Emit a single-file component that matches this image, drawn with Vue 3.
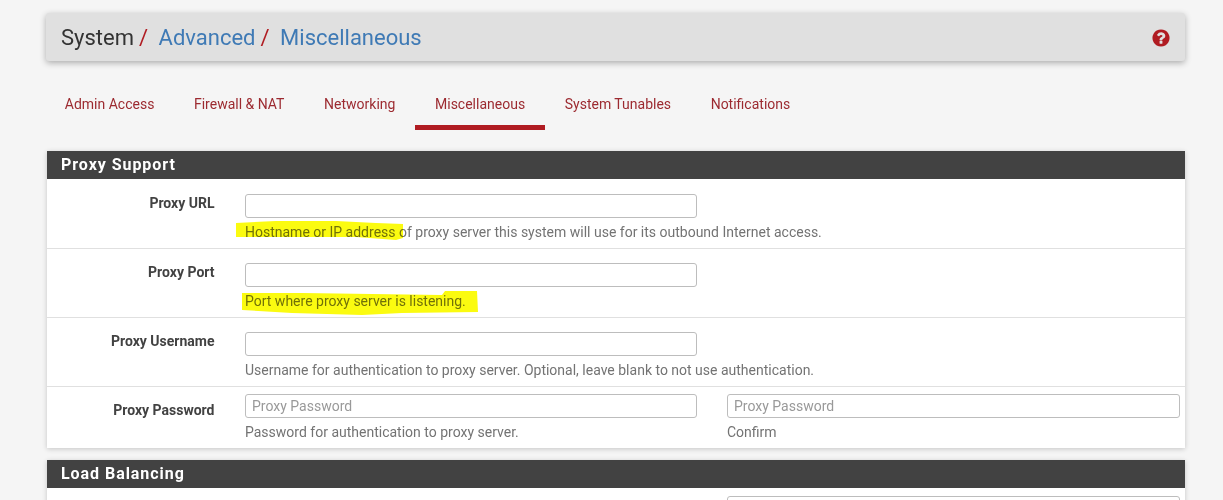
<template>
  <div class="page">
    <div class="crumbs">
      <h2 class="crumb-title">
        <span>System</span><em>/</em>
        <a>Advanced</a><em>/</em>
        <a>Miscellaneous</a>
      </h2>
      <svg class="help-icon" viewBox="0 0 1792 1792" aria-hidden="true">
        <path
          fill="#b01c22"
          d="M1024 1376v-192q0-14-9-23t-23-9h-192q-14 0-23 9t-9 23v192q0 14 9 23t23 9h192q14 0 23-9t9-23zm256-672q0-88-55.5-163t-138.5-116-170-41q-243 0-371 213-15 24 8 42l132 100q7 6 19 6 16 0 25-12 53-68 86-92 34-24 86-24 48 0 85.5 26t37.5 59q0 38-20 61t-68 45q-63 28-115.5 86.5t-52.5 125.5v36q0 14 9 23t23 9h192q14 0 23-9t9-23q0-19 21.5-49.5t54.5-49.5q32-18 49-28.5t46-35 44.5-48 28-60.5 12.5-81zm384 192q0 209-103 385.5t-279.5 279.5-385.5 103-385.5-103-279.5-279.5-103-385.5 103-385.5 279.5-279.5 385.5-103 385.5 103 279.5 279.5 103 385.5z"
        />
      </svg>
    </div>

    <ul class="tabs">
      <li v-for="tab in tabs" :key="tab" :class="{ active: tab === 'Miscellaneous' }">{{ tab }}</li>
    </ul>

    <section class="panel">
      <h3 class="panel-head">Proxy Support</h3>
      <div class="row">
        <label class="row-label">Proxy URL</label>
        <div class="field">
          <input class="text-input" type="text" />
          <div class="help">Hostname or IP address of proxy server this system will use for its outbound Internet access.</div>
          <svg class="marker marker-url" viewBox="0 0 168 20" aria-hidden="true">
            <path d="M0 3 L40 1 L100 1 L140 3 L167 4 L167 18 L160 20 L120 17 L60 17 L0 17 Z" />
          </svg>
        </div>
      </div>
      <div class="row">
        <label class="row-label">Proxy Port</label>
        <div class="field">
          <input class="text-input" type="text" />
          <div class="help">Port where proxy server is listening.</div>
          <svg class="marker marker-port" viewBox="0 0 236 26" aria-hidden="true">
            <path d="M0 3 L60 3 L200 5 L203 1 L235 1 L236 22 L160 23 L120 25 L50 23 L0 20 Z" />
          </svg>
        </div>
      </div>
      <div class="row">
        <label class="row-label">Proxy Username</label>
        <div class="field">
          <input class="text-input" type="text" />
          <div class="help">Username for authentication to proxy server. Optional, leave blank to not use authentication.</div>
        </div>
      </div>
      <div class="row row-double">
        <label class="row-label">Proxy Password</label>
        <div class="field">
          <input class="text-input" type="text" placeholder="Proxy Password" />
          <div class="help">Password for authentication to proxy server.</div>
        </div>
        <div class="field">
          <input class="text-input" type="text" placeholder="Proxy Password" />
          <div class="help">Confirm</div>
        </div>
      </div>
    </section>

    <section class="panel">
      <h3 class="panel-head">Load Balancing</h3>
      <div class="row row-double">
        <span></span>
        <span></span>
        <div class="field">
          <input class="text-input" type="text" />
        </div>
      </div>
    </section>
  </div>
</template>

<script setup>
const tabs = [
  'Admin Access',
  'Firewall & NAT',
  'Networking',
  'Miscellaneous',
  'System Tunables',
  'Notifications',
]
</script>

<style scoped>
.page {
  height: 500px;
  padding: 13px 38px 0 46px;
  box-sizing: border-box;
  overflow: hidden;
  background: #f5f5f5;
  font-family: Roboto, "Liberation Sans", sans-serif;
  font-size: 14px;
  color: #424242;
}

.crumbs {
  display: flex;
  align-items: center;
  justify-content: space-between;
  height: 48px;
  padding: 2px 15px 0;
  box-sizing: border-box;
  background: #e0e0e0;
  border-radius: 3px;
  box-shadow: 0 2px 6px rgba(0, 0, 0, 0.3);
}

.crumb-title {
  margin: 0;
  font-size: 22px;
  font-weight: 400;
  line-height: 46px;
  color: #333;
}

.crumb-title em {
  margin: 0 10.5px 0 5px;
  font-style: normal;
  color: #b01c22;
}

.crumb-title a {
  color: #3f7ab5;
}

.help-icon {
  width: 20px;
  height: 20px;
  margin-right: -1px;
}

.tabs {
  display: flex;
  margin: 0 0 21px -1px;
  padding: 0;
  list-style: none;
}

.tabs li {
  height: 69px;
  padding: 0 19.8px;
  box-sizing: border-box;
  line-height: 86px;
  color: #9c2a30;
}

.tabs li.active {
  border-bottom: 5px solid #b01c22;
}

.panel {
  margin: 0 0 12px 1px;
  background: #fff;
  box-shadow: 0 1px 5px rgba(0, 0, 0, 0.2);
}

.panel-head {
  margin: 0 0 1px;
  height: 28px;
  padding-left: 14px;
  background: #424242;
  color: #fff;
  font-size: 16px;
  font-weight: 700;
  line-height: 28px;
  letter-spacing: 0.95px;
}

.row {
  display: grid;
  grid-template-columns: 168px 452px 453px;
  column-gap: 30px;
  height: 69px;
  box-sizing: border-box;
  border-bottom: 1px solid #e0e0e0;
}

.row-double {
  height: 61px;
  border-bottom: 0;
}

.row-label {
  padding: 14px 0.5px 0 0;
  font-weight: 700;
  line-height: 18px;
  text-align: right;
}

.field {
  position: relative;
  padding-top: 14px;
}

.row-double .field {
  padding-top: 7px;
}

.text-input {
  display: block;
  width: 100%;
  height: 24px;
  padding: 0 6px;
  box-sizing: border-box;
  border: 1px solid #bdbdbd;
  border-radius: 3px;
  background: #fff;
  font: inherit;
  color: #424242;
}

.text-input::placeholder {
  color: #999;
  opacity: 1;
}

.help {
  margin-top: 4px;
  line-height: 20px;
  white-space: nowrap;
  color: #737373;
}

/* highlighter strokes sitting on top of the help text */
.marker {
  position: absolute;
  fill: #fbfb10;
  mix-blend-mode: multiply;
  pointer-events: none;
}

.marker-url {
  left: -9px;
  top: 40px;
  width: 168px;
  height: 20px;
}

.marker-port {
  left: -3px;
  top: 41px;
  width: 236px;
  height: 26px;
}
</style>

<style>
html,
body {
  margin: 0;
  background: #f5f5f5;
}
</style>
